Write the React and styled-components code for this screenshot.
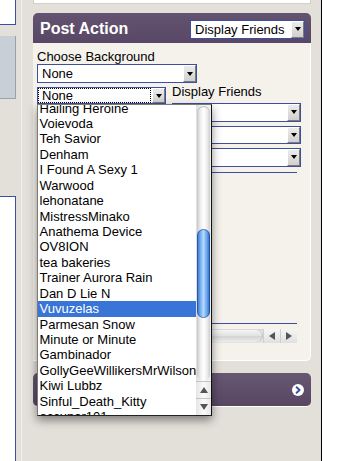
import React from "react";
import styled, { createGlobalStyle } from "styled-components";

const GlobalStyle = createGlobalStyle`
  body {
    margin: 0;
    background: #ffffff;
  }
`;

const Page = styled.div`
  display: flex;
  width: 354px;
  height: 461px;
  overflow: hidden;
  background: #e3dfd9;
  font-family: "Liberation Sans", Arial, sans-serif;
  font-size: 13px;
  color: #000;
`;

const LeftCol = styled.div`
  display: flex;
  flex-direction: column;
  width: 16px;
`;

const SideBox = styled.div`
  box-sizing: border-box;
  border-right: 1px solid #3d4f9e;

  ${(p) =>
    p.$kind === "top" &&
    `
    height: 25px;
    background: #fff;
    border-bottom: 1px solid #3d4f9e;
  `}

  ${(p) =>
    p.$kind === "gray" &&
    `
    margin-top: 11px;
    height: 63px;
    background: #c8cfd6;
    border-color: #97a0ab;
    border-bottom: 1px solid #97a0ab;
  `}

  ${(p) =>
    p.$kind === "bottom" &&
    `
    margin-top: 97px;
    flex: 1;
    background: #fff;
    border-top: 1px solid #3d4f9e;
  `}
`;

const Gutter = styled.div`
  width: 17px;
  background: linear-gradient(
    to right,
    #e3dfd9 5px,
    #f3f1ed 5px,
    #f3f1ed 6px,
    #e3dfd9 6px
  );
`;

const Main = styled.div`
  display: flex;
  flex-direction: column;
  width: 278px;
`;

const TopBox = styled.div`
  height: 3px;
  margin-bottom: 9px;
  background: #fff;
  border: 1px solid #d4d0c8;
  border-top: none;
`;

const PanelHeader = styled.div`
  display: flex;
  align-items: center;
  justify-content: space-between;
  height: 30px;
  padding: 2px 6px 0 7px;
  box-sizing: border-box;
  border-radius: 5px 5px 0 0;
  background: linear-gradient(#645370, #584865);
`;

const Title = styled.h2`
  margin: 0;
  font-size: 16px;
  font-weight: bold;
  color: #fff;
`;

const PanelBody = styled.div`
  height: 318px;
  box-sizing: border-box;
  padding: 6px 4px 0;
  background: #f5f2ec;
  border-right: 1px solid #fff;
  border-bottom: 1px solid #fff;
  border-bottom-right-radius: 5px;
`;

const Label = styled.div`
  line-height: 15px;
  height: 15px;
  white-space: nowrap;
`;

const SelectBox = styled.div`
  display: flex;
  box-sizing: border-box;
  width: ${(p) => p.$w}px;
  height: ${(p) => p.$h}px;
  margin-top: ${(p) => p.$mt || 0}px;
  background: #fff;
  border: 1px solid #3d4f9e;
`;

const SelectText = styled.div`
  flex: 1;
  display: flex;
  align-items: center;
  padding-left: 4px;
  white-space: nowrap;
  overflow: hidden;
  ${(p) =>
    p.$focused &&
    `
    outline: 1px dotted #000;
    outline-offset: -1px;
    margin-right: 1px;
  `}
`;

const DropButton = styled.div`
  display: flex;
  align-items: center;
  justify-content: center;
  width: 13px;
  margin: 0;
  box-sizing: border-box;
  background: linear-gradient(#ececec, #d2d0cc);
  border-top: 1px solid #fff;
  border-left: 1px solid #fff;
  border-right: 1px solid #7c7c7c;
  border-bottom: 1px solid #7c7c7c;

  &::after {
    content: "";
    border-left: 3.5px solid transparent;
    border-right: 3.5px solid transparent;
    border-top: 4px solid #000;
  }
`;

const Row = styled.div`
  display: flex;
  align-items: flex-start;
  margin-top: 1px;
`;

const DropWrap = styled.div`
  position: relative;
  z-index: 2;
  padding-top: 3px;
`;

const RightCol = styled.div`
  display: flex;
  flex-direction: column;
  margin-left: 6px;
  width: 129px;
`;

const RightSelect = styled(SelectBox)`
  height: 18.4px;
  margin-top: ${(p) => p.$mt}px;
`;

const ListBox = styled.div`
  width: 125px;
  height: 150px;
  margin-top: 5.3px;
  border-top: 1px solid #3d4f9e;
  border-bottom: 1px solid #3d4f9e;
`;

const HScroll = styled.div`
  display: flex;
  width: 125px;
  height: 14px;
  margin-top: 5px;
  background: #f0f0f0;
`;

const HTrack = styled.div`
  flex: 1;
  display: flex;
  padding: 1px 0;
  background: linear-gradient(#d8d8d8, #f6f6f6 50%, #e2e2e2);
`;

const HThumb = styled.div`
  flex: 1;
  border-radius: 0 7px 7px 0;
  background: linear-gradient(#f4f4f4, #e4e4e4 45%, #d4d4d4 55%, #ececec);
  box-shadow: inset -1px 0 0 #c4c4c4;
`;

const HArrow = styled.div`
  display: flex;
  align-items: center;
  justify-content: center;
  width: 16px;
  background: linear-gradient(#f6f6f6, #e0e0e0);
  border-left: 1px solid #cfcfcf;

  &::after {
    content: "";
    border-top: 4px solid transparent;
    border-bottom: 4px solid transparent;
    ${(p) =>
      p.$dir === "left"
        ? "border-right: 6px solid #555;"
        : "border-left: 6px solid #555;"}
  }
`;

const Dropdown = styled.div`
  position: absolute;
  top: 100%;
  left: 0;
  display: flex;
  width: 175px;
  height: 312px;
  box-sizing: border-box;
  background: #fff;
  border: 1px solid #7a7a7a;
  border-right-color: #111;
  border-bottom-color: #222;
  box-shadow: 0 4px 9px rgba(0, 0, 0, 0.45);
`;

const Items = styled.div`
  flex: 1;
  overflow: hidden;
`;

const ItemsInner = styled.div`
  margin-top: -4.4px;
`;

const Item = styled.div`
  height: 15.43px;
  line-height: 15.43px;
  padding-left: 1.5px;
  white-space: nowrap;
  overflow: hidden;
  ${(p) =>
    p.$selected &&
    `
    background: #3875d7;
    color: #fff;
  `}
`;

const VScroll = styled.div`
  display: flex;
  flex-direction: column;
  width: 15px;
  background: linear-gradient(to right, #dcdcdc, #f8f8f8 40%, #eeeeee);
`;

const VTrack = styled.div`
  flex: 1;
  display: flex;
  flex-direction: column;
  margin: 1px 1px 0;
  border-radius: 7px;
  background: linear-gradient(
    to right,
    #c8c8c8,
    #ececec 25%,
    #ffffff 50%,
    #f0f0f0 75%,
    #cdcdcd
  );
  box-shadow: inset 0 1px 0 #bbb;
`;

const VThumb = styled.div`
  margin-top: ${(p) => p.$top}px;
  height: ${(p) => p.$h}px;
  border-radius: 7px;
  background: linear-gradient(
    to right,
    #2e6cc8,
    #7fb4f2 30%,
    #b4d8ff 50%,
    #6aa6ee 75%,
    #2a62c0
  );
  box-shadow: inset 0 0 0 1px rgba(20, 60, 140, 0.5);
`;

const VArrow = styled.div`
  display: flex;
  align-items: center;
  justify-content: center;
  height: 16px;
  border-top: 1px solid #c4c4c4;
  background: linear-gradient(to right, #e4e4e4, #fafafa 50%, #e8e8e8);

  &::after {
    content: "";
    border-left: 4px solid transparent;
    border-right: 4px solid transparent;
    ${(p) =>
      p.$dir === "up"
        ? "border-bottom: 6px solid #555;"
        : "border-top: 6px solid #555;"}
  }
`;

const Bar = styled.div`
  display: flex;
  align-items: center;
  justify-content: flex-end;
  height: 34px;
  margin-top: 12px;
  padding-right: 7px;
  border-radius: 5px;
  background: linear-gradient(#675773, #574763);
  border-bottom: 1px solid #fff;
  box-sizing: border-box;
`;

const RightGutter = styled.div`
  width: 10px;
`;

const VLine = styled.div`
  width: 1px;
  background: #000;
`;

const Blank = styled.div`
  flex: 1;
  background: #fff;
`;

const friends = [
  "Hailing Heroine",
  "Voievoda",
  "Teh Savior",
  "Denham",
  "I Found A Sexy 1",
  "Warwood",
  "lehonatane",
  "MistressMinako",
  "Anathema Device",
  "OV8ION",
  "tea bakeries",
  "Trainer Aurora Rain",
  "Dan D Lie N",
  "Vuvuzelas",
  "Parmesan Snow",
  "Minute or Minute",
  "Gambinador",
  "GollyGeeWillikersMrWilson",
  "Kiwi Lubbz",
  "Sinful_Death_Kitty",
  "occupar101",
];

function Select({ w, h, mt, text, focused }) {
  return (
    <SelectBox $w={w} $h={h} $mt={mt}>
      <SelectText $focused={focused}>{text}</SelectText>
      <DropButton />
    </SelectBox>
  );
}

function NextIcon() {
  return (
    <svg width="12" height="12" viewBox="0 0 12 12">
      <circle cx="6" cy="6" r="6" fill="#fff" />
      <path
        d="M4.6 3.2 L7.6 6 L4.6 8.8"
        fill="none"
        stroke="#3d4f9e"
        strokeWidth="1.9"
        strokeLinecap="round"
        strokeLinejoin="round"
      />
    </svg>
  );
}

export default function App() {
  return (
    <>
      <GlobalStyle />
      <Page>
        <LeftCol>
          <SideBox $kind="top" />
          <SideBox $kind="gray" />
          <SideBox $kind="bottom" />
        </LeftCol>
        <Gutter />
        <Main>
          <TopBox />
          <PanelHeader>
            <Title>Post Action</Title>
            <Select w={115} h={19} text="Display Friends" />
          </PanelHeader>
          <PanelBody>
            <Label>Choose Background</Label>
            <Select w={160} h={19} text="None" />
            <Row>
              <DropWrap>
                <Select w={129} h={17} text="None" focused />
                <Dropdown>
                  <Items>
                    <ItemsInner>
                      {friends.map((name) => (
                        <Item key={name} $selected={name === "Vuvuzelas"}>
                          {name}
                        </Item>
                      ))}
                    </ItemsInner>
                  </Items>
                  <VScroll>
                    <VTrack>
                      <VThumb $top={123} $h={89} />
                    </VTrack>
                    <VArrow $dir="up" />
                    <VArrow $dir="down" />
                  </VScroll>
                </Dropdown>
              </DropWrap>
              <RightCol>
                <Label>Display Friends</Label>
                <RightSelect $w={129} $mt={4.3}>
                  <SelectText />
                  <DropButton />
                </RightSelect>
                <RightSelect $w={129} $mt={4.1}>
                  <SelectText />
                  <DropButton />
                </RightSelect>
                <RightSelect $w={129} $mt={4.1}>
                  <SelectText />
                  <DropButton />
                </RightSelect>
                <ListBox />
                <HScroll>
                  <HTrack>
                    <HThumb />
                  </HTrack>
                  <HArrow $dir="left" />
                  <HArrow $dir="right" />
                </HScroll>
              </RightCol>
            </Row>
          </PanelBody>
          <Bar>
            <NextIcon />
          </Bar>
        </Main>
        <RightGutter />
        <VLine />
        <Blank />
      </Page>
    </>
  );
}
